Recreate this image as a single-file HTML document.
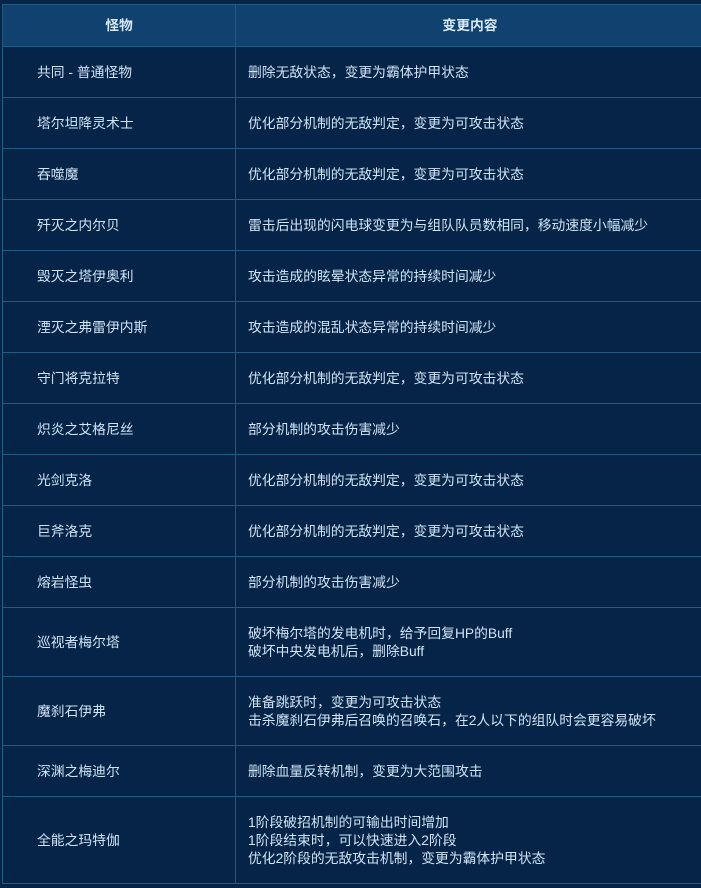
<!DOCTYPE html>
<html><head><meta charset="utf-8"><style>
*{margin:0;padding:0;box-sizing:border-box}
html,body{width:701px;height:888px;overflow:hidden;background:#062447;font-family:"Liberation Sans","Noto Sans CJK SC",sans-serif;font-size:13.8px;color:#cfe3f7}
.t{position:absolute;left:2px;top:4px;width:702px;border-left:1px solid #1f5a80}
.r{position:relative;border-bottom:1px solid #1f5a80;display:flex}
.a{width:233px;border-right:1px solid #1f5a80;display:flex;align-items:center;padding-left:34px;line-height:18px;padding-top:1px}
.b{flex:1;display:flex;align-items:center;padding-left:12px;line-height:18px;padding-top:1px}
.h{background:#11426f;border-top:1px solid #1f5a80;height:43px;font-weight:bold;color:#d6e8fa}
.h .a{justify-content:center;padding-left:0}
.h .b{justify-content:center;padding-left:0}
</style></head><body>
<div class="t">
<div class="r h"><div class="a">怪物</div><div class="b">变更内容</div></div>
<div class="r" style="height:51px"><div class="a">共同 - 普通怪物</div><div class="b">删除无敌状态，变更为霸体护甲状态</div></div>
<div class="r" style="height:51px"><div class="a">塔尔坦降灵术士</div><div class="b">优化部分机制的无敌判定，变更为可攻击状态</div></div>
<div class="r" style="height:51px"><div class="a">吞噬魔</div><div class="b">优化部分机制的无敌判定，变更为可攻击状态</div></div>
<div class="r" style="height:51px"><div class="a">歼灭之内尔贝</div><div class="b">雷击后出现的闪电球变更为与组队队员数相同，移动速度小幅减少</div></div>
<div class="r" style="height:51px"><div class="a">毁灭之塔伊奥利</div><div class="b">攻击造成的眩晕状态异常的持续时间减少</div></div>
<div class="r" style="height:51px"><div class="a">湮灭之弗雷伊内斯</div><div class="b">攻击造成的混乱状态异常的持续时间减少</div></div>
<div class="r" style="height:51px"><div class="a">守门将克拉特</div><div class="b">优化部分机制的无敌判定，变更为可攻击状态</div></div>
<div class="r" style="height:51px"><div class="a">炽炎之艾格尼丝</div><div class="b">部分机制的攻击伤害减少</div></div>
<div class="r" style="height:51px"><div class="a">光剑克洛</div><div class="b">优化部分机制的无敌判定，变更为可攻击状态</div></div>
<div class="r" style="height:51px"><div class="a">巨斧洛克</div><div class="b">优化部分机制的无敌判定，变更为可攻击状态</div></div>
<div class="r" style="height:51px"><div class="a">熔岩怪虫</div><div class="b">部分机制的攻击伤害减少</div></div>
<div class="r" style="height:69px"><div class="a">巡视者梅尔塔</div><div class="b">破坏梅尔塔的发电机时，给予回复HP的Buff<br>破坏中央发电机后，删除Buff</div></div>
<div class="r" style="height:69px"><div class="a">魔刹石伊弗</div><div class="b">准备跳跃时，变更为可攻击状态<br>击杀魔刹石伊弗后召唤的召唤石，在2人以下的组队时会更容易破坏</div></div>
<div class="r" style="height:51px"><div class="a">深渊之梅迪尔</div><div class="b">删除血量反转机制，变更为大范围攻击</div></div>
<div class="r" style="height:87px"><div class="a">全能之玛特伽</div><div class="b">1阶段破招机制的可输出时间增加<br>1阶段结束时，可以快速进入2阶段<br>优化2阶段的无敌攻击机制，变更为霸体护甲状态</div></div>
</div>
</body></html>
